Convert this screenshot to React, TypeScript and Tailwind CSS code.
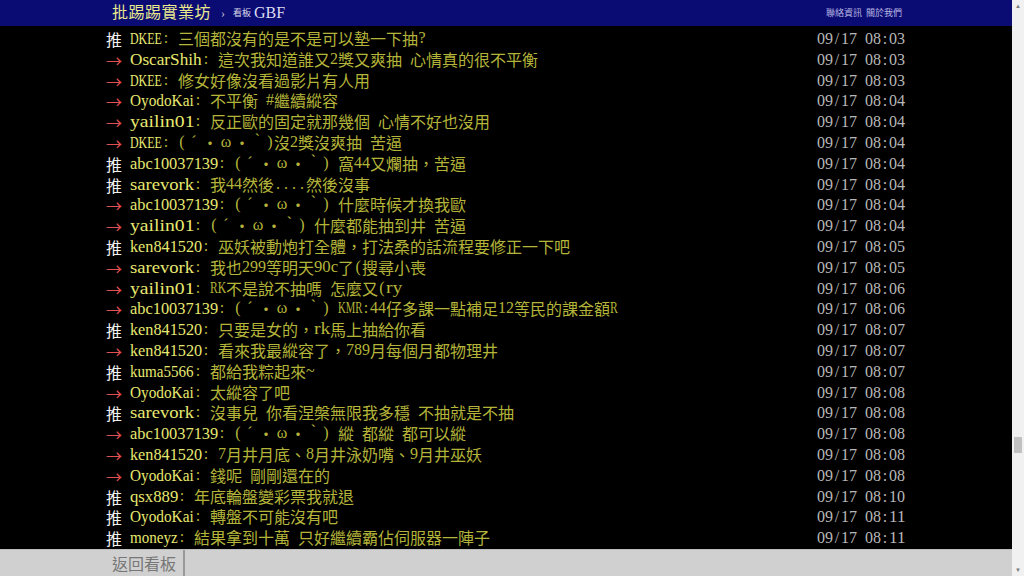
import { useLayoutEffect, useRef, useState } from "react";

type Push = { tag: "推" | "→"; user: string; text: string; time: string };

const pushes: Push[] = [
  { tag: "推", user: "DKEE", text: "三個都沒有的是不是可以墊一下抽?", time: "08:03" },
  { tag: "→", user: "OscarShih", text: "這次我知道誰又2獎又爽抽 心情真的很不平衡", time: "08:03" },
  { tag: "→", user: "DKEE", text: "修女好像沒看過影片有人用", time: "08:03" },
  { tag: "→", user: "OyodoKai", text: "不平衡 #繼續縱容", time: "08:04" },
  { tag: "→", user: "yailin01", text: "反正歐的固定就那幾個 心情不好也沒用", time: "08:04" },
  { tag: "→", user: "DKEE", text: "(´・ω・｀)沒2獎沒爽抽 苦逼", time: "08:04" },
  { tag: "推", user: "abc10037139", text: "(´・ω・｀) 窩44又爛抽，苦逼", time: "08:04" },
  { tag: "推", user: "sarevork", text: "我44然後....然後沒事", time: "08:04" },
  { tag: "→", user: "abc10037139", text: "(´・ω・｀) 什麼時候才換我歐", time: "08:04" },
  { tag: "→", user: "yailin01", text: "(´・ω・｀) 什麼都能抽到井 苦逼", time: "08:04" },
  { tag: "推", user: "ken841520", text: "巫妖被動炮打全體，打法桑的話流程要修正一下吧", time: "08:05" },
  { tag: "→", user: "sarevork", text: "我也299等明天90c了(搜尋小喪", time: "08:05" },
  { tag: "→", user: "yailin01", text: "RK不是說不抽嗎 怎麼又(ry", time: "08:06" },
  { tag: "→", user: "abc10037139", text: "(´・ω・｀) KMR:44仔多課一點補足12等民的課金額R", time: "08:06" },
  { tag: "推", user: "ken841520", text: "只要是女的，rk馬上抽給你看", time: "08:07" },
  { tag: "→", user: "ken841520", text: "看來我最縱容了，789月每個月都物理井", time: "08:07" },
  { tag: "推", user: "kuma5566", text: "都給我粽起來~", time: "08:07" },
  { tag: "→", user: "OyodoKai", text: "太縱容了吧", time: "08:08" },
  { tag: "推", user: "sarevork", text: "沒事兒 你看涅槃無限我多穩 不抽就是不抽", time: "08:08" },
  { tag: "→", user: "abc10037139", text: "(´・ω・｀) 縱 都縱 都可以縱", time: "08:08" },
  { tag: "→", user: "ken841520", text: "7月井月底、8月井泳奶嘴、9月井巫妖", time: "08:08" },
  { tag: "→", user: "OyodoKai", text: "錢呢 剛剛還在的", time: "08:08" },
  { tag: "推", user: "qsx889", text: "年底輪盤變彩票我就退", time: "08:10" },
  { tag: "推", user: "OyodoKai", text: "轉盤不可能沒有吧", time: "08:11" },
  { tag: "推", user: "moneyz", text: "結果拿到十萬 只好繼續霸佔伺服器一陣子", time: "08:11" },
];

// a run of letters/digits squeezed (or stretched) into 8px per char, like a terminal font
const HalfRun = ({ text }: { text: string }) => {
  const ref = useRef<HTMLSpanElement>(null);
  const [scale, setScale] = useState(1);
  const width = text.length * 8;

  useLayoutEffect(() => {
    const w = ref.current?.offsetWidth ?? 0;
    if (w > 0) setScale(width / w);
  }, [text, width]);

  return (
    <span className="inline-block align-top" style={{ width }}>
      <span
        ref={ref}
        className="inline-block origin-left whitespace-pre"
        style={{ transform: `scaleX(${scale})` }}
      >
        {text}
      </span>
    </span>
  );
};

const Term = ({ text }: { text: string }) => {
  const parts = text.match(/[A-Za-z0-9]+|[\x20-\x7e]|[´ω]|[^\x20-\x7e´ω]+/g) ?? [];
  return (
    <>
      {parts.map((part, i) => {
        if (/^[A-Za-z0-9]+$/.test(part)) return <HalfRun key={i} text={part} />;
        if (/^[\x20-\x7e]$/.test(part))
          return (
            <span key={i} className="inline-block w-2 text-center align-top">
              {part === " " ? "\u00a0" : part}
            </span>
          );
        if (part === "´" || part === "ω")
          return (
            <span key={i} className="inline-block w-4 text-center align-top">
              {part}
            </span>
          );
        return (
          <span key={i} className="font-['Noto_Sans_CJK_TC',sans-serif]">
            {part}
          </span>
        );
      })}
    </>
  );
};

const PushRow = ({ push }: { push: Push }) => {
  return (
    <div className="flex items-center h-[20.8px] leading-[20.8px] text-[16px] whitespace-nowrap">
      <span
        className={
          push.tag === "推"
            ? "w-6 text-[#f2f2f2] font-['Noto_Sans_CJK_TC',sans-serif]"
            : "w-6 text-[#e05050] font-['Noto_Sans_CJK_TC',sans-serif]"
        }
      >
        {push.tag}
      </span>
      <span className="text-[#e8e870]">
        <Term text={push.user} />
      </span>
      <span className="text-[#b4b43a] flex-1">
        <Term text={": " + push.text} />
      </span>
      <span className="text-[#b8b8b8] pl-4">
        <Term text={"09/17 " + push.time} />
      </span>
    </div>
  );
};

export default function App() {
  return (
    <div className="flex h-screen w-full font-['Liberation_Serif','Noto_Sans_CJK_TC',serif] overflow-hidden">
      <div className="flex flex-col flex-1 min-w-0">
        {/* top bar */}
        <div className="h-[26px] bg-[#0b0b74] shrink-0">
          <div className="w-[800px] mx-auto flex items-center h-full px-[6px]">
            <span className="text-[16px] text-[#e8e88c] tracking-[0.5px]">批踢踢實業坊</span>
            <span className="text-[12px] text-[#c8c8d8] ml-[10px]">›</span>
            <span className="text-[9px] text-[#d8d8e8] ml-[8px] font-['Noto_Sans_CJK_TC',sans-serif]">看板</span>
            <span className="text-[16px] text-[#dcdcf0] ml-[3px]">GBF</span>
            <div className="ml-auto mr-[-2px] flex gap-[4px] text-[9px] text-[#b8b8e0] font-['Noto_Sans_CJK_TC',sans-serif]">
              <span>聯絡資訊</span>
              <span>關於我們</span>
            </div>
          </div>
        </div>

        {/* pushes */}
        <div className="flex-1 bg-black overflow-hidden pt-[3px]">
          <div className="w-[800px] mx-auto pr-[1px]">
            {pushes.map((push, index) => (
              <PushRow key={index} push={push} />
            ))}
          </div>
        </div>

        {/* bottom bar */}
        <div className="h-[27px] shrink-0 bg-[#d0d0d0] border-t border-[#bdbdbd]">
          <div className="w-[800px] mx-auto flex h-full">
            <div className="w-[79px] h-full flex items-center pl-[6px] text-[16px] text-[#777777] border-r-2 border-[#9a9a9a] font-['Noto_Sans_CJK_TC',sans-serif]">
              返回看板
            </div>
          </div>
        </div>
      </div>

      {/* scrollbar */}
      <div className="w-3 shrink-0 bg-[#f1f1f1] flex flex-col items-center">
        <div className="h-3 flex items-center justify-center text-[6px] text-[#7a7a7a]">▲</div>
        <div className="h-[425px]" />
        <div className="h-4 w-2 bg-[#c1c1c1]" />
        <div className="flex-1" />
        <div className="h-3 flex items-center justify-center text-[6px] text-[#7a7a7a]">▼</div>
      </div>
    </div>
  );
}
